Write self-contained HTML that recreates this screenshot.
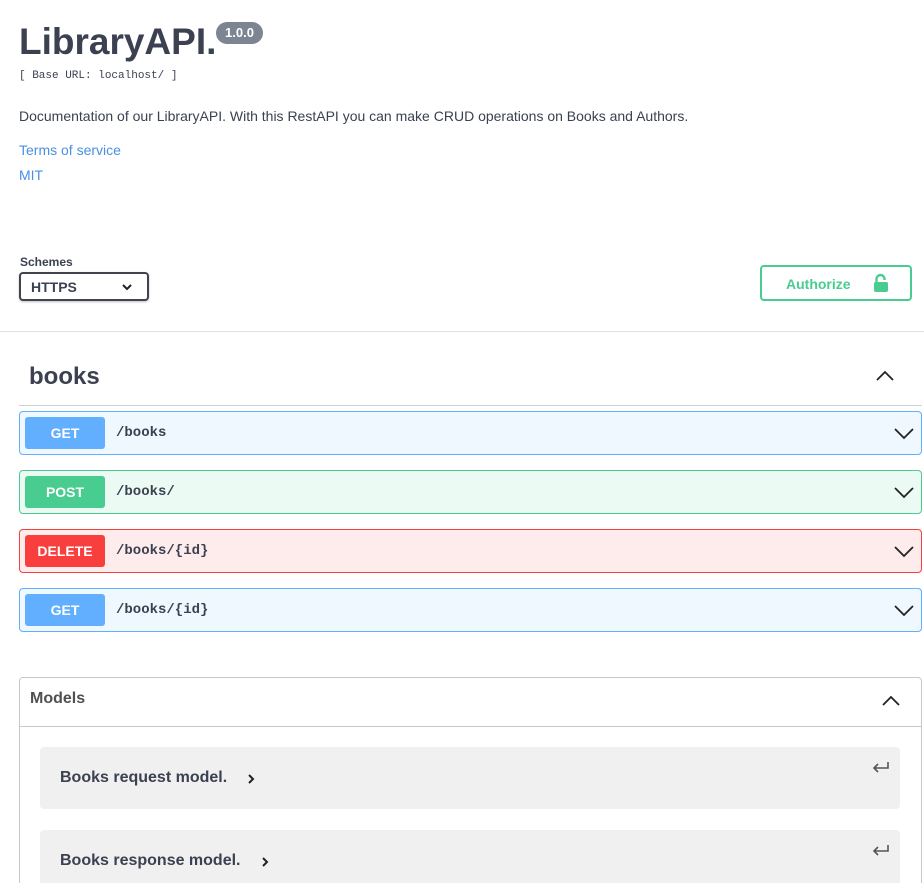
<!DOCTYPE html>
<html><head><meta charset="utf-8"><style>
*{box-sizing:border-box;margin:0;padding:0}
html,body{width:924px;height:883px;overflow:hidden}
body{background:#fff;font-family:"Liberation Sans",sans-serif;color:#3b4151;position:relative}
.a{position:absolute}
.op{position:absolute;left:19px;width:903px;height:44px;border:1px solid;border-radius:4px}
.op .m{position:absolute;left:5px;top:5px;width:80px;height:32px;border-radius:3px;color:#fff;font-weight:bold;font-size:14px;text-align:center;line-height:32px}
.op .p{position:absolute;left:96px;top:13px;font-family:"Liberation Mono",monospace;font-weight:bold;font-size:14px;color:#3b4151}
.op svg{position:absolute;right:7px;top:14px}
.get{background:#eff7ff;border-color:#61affe}.get .m{background:#61affe}
.post{background:#ecfaf4;border-color:#49cc90}.post .m{background:#49cc90}
.del{background:#feebeb;border-color:#f93e3e}.del .m{background:#f93e3e}
.mi{position:absolute;left:40px;width:860px;height:62px;background:#f0f0f0;border-radius:4px}
.mi span{position:absolute;left:20px;top:22px;font-size:16px;font-weight:bold;color:#3b4151}
</style></head><body>
<div class="a" style="left:19px;top:20px;font-size:37px;font-weight:bold;line-height:44px">LibraryAPI.</div>
<div class="a" style="left:216px;top:22px;width:47px;height:22px;background:#7d8492;border-radius:11px;color:#fff;font-size:13px;font-weight:bold;text-align:center;line-height:22px">1.0.0</div>
<div class="a" style="left:19px;top:70px;font-family:'Liberation Mono',monospace;font-size:11px">[ Base URL: localhost/ ]</div>
<div class="a" style="left:19px;top:108px;font-size:14px">Documentation of our LibraryAPI. With this RestAPI you can make CRUD operations on Books and Authors.</div>
<div class="a" style="left:19px;top:142px;font-size:14px;color:#4990e2">Terms of service</div>
<div class="a" style="left:19px;top:167px;font-size:14px;color:#4990e2">MIT</div>
<div class="a" style="left:20px;top:255px;font-size:12px;font-weight:bold">Schemes</div>
<div class="a" style="left:19px;top:272px;width:130px;height:29px;border:2px solid #41444e;border-radius:4px;box-shadow:0 1px 2px rgba(0,0,0,.25)"><span class="a" style="left:10px;top:5px;font-size:14px;font-weight:bold">HTTPS</span>
<svg class="a" style="left:100px;top:8px" width="12" height="10" viewBox="0 0 12 10"><path d="M2 3l4 4 4-4" fill="none" stroke="#222" stroke-width="2"/></svg></div>
<div class="a" style="left:760px;top:265px;width:152px;height:36px;border:2px solid #49cc90;border-radius:4px"><span class="a" style="left:24px;top:9px;font-size:14px;font-weight:bold;color:#49cc90">Authorize</span>
<svg class="a" style="left:111px;top:6px" width="16" height="20" viewBox="0 0 16 20"><path d="M3.5 10V6a4 4 0 0 1 8 0v1" fill="none" stroke="#49cc90" stroke-width="2.4"/><rect x="1" y="9" width="14" height="10" rx="2" fill="#49cc90"/></svg></div>
<div class="a" style="left:0;top:331px;width:924px;height:1px;background:#e0e0e0"></div>
<div class="a" style="left:29px;top:363px;font-size:24px;font-weight:bold">books</div>
<svg class="a" style="left:876px;top:369px" width="18" height="14" viewBox="0 0 18 14"><path d="M1 11l8-8 8 8" fill="none" stroke="#222" stroke-width="1.8"/></svg>
<div class="a" style="left:19px;top:405px;width:903px;height:1px;background:#cfd2d6"></div>
<div class="op get" style="top:411px"><div class="m">GET</div><div class="p">/books</div><svg width="20" height="14" viewBox="0 0 20 14"><path d="M1 3l9 9 9-9" fill="none" stroke="#222" stroke-width="1.8"/></svg></div>
<div class="op post" style="top:470px"><div class="m">POST</div><div class="p">/books/</div><svg width="20" height="14" viewBox="0 0 20 14"><path d="M1 3l9 9 9-9" fill="none" stroke="#222" stroke-width="1.8"/></svg></div>
<div class="op del" style="top:529px"><div class="m">DELETE</div><div class="p">/books/{id}</div><svg width="20" height="14" viewBox="0 0 20 14"><path d="M1 3l9 9 9-9" fill="none" stroke="#222" stroke-width="1.8"/></svg></div>
<div class="op get" style="top:588px"><div class="m">GET</div><div class="p">/books/{id}</div><svg width="20" height="14" viewBox="0 0 20 14"><path d="M1 3l9 9 9-9" fill="none" stroke="#222" stroke-width="1.8"/></svg></div>
<div class="a" style="left:19px;top:677px;width:903px;height:220px;border:1px solid #c8c8c8;border-radius:4px"></div>
<div class="a" style="left:30px;top:690px;font-size:16px;font-weight:bold;color:#505050">Models</div>
<svg class="a" style="left:882px;top:694px" width="18" height="14" viewBox="0 0 18 14"><path d="M1 11l8-8 8 8" fill="none" stroke="#222" stroke-width="1.8"/></svg>
<div class="a" style="left:20px;top:726px;width:901px;height:1px;background:#c8c8c8"></div>
<div class="mi" style="top:747px"><span>Books request model.</span><svg class="a" style="left:206px;top:26px" width="10" height="12" viewBox="0 0 10 12"><path d="M3 2l4 4-4 4" fill="none" stroke="#222" stroke-width="2"/></svg><svg class="a" style="left:832px;top:14px" width="18" height="12" viewBox="0 0 18 12"><path d="M16 1v6H2M6 3L2 7l4 4" fill="none" stroke="#555" stroke-width="1.6"/></svg></div>
<div class="mi" style="top:830px"><span>Books response model.</span><svg class="a" style="left:220px;top:26px" width="10" height="12" viewBox="0 0 10 12"><path d="M3 2l4 4-4 4" fill="none" stroke="#222" stroke-width="2"/></svg><svg class="a" style="left:832px;top:14px" width="18" height="12" viewBox="0 0 18 12"><path d="M16 1v6H2M6 3L2 7l4 4" fill="none" stroke="#555" stroke-width="1.6"/></svg></div>
</body></html>
